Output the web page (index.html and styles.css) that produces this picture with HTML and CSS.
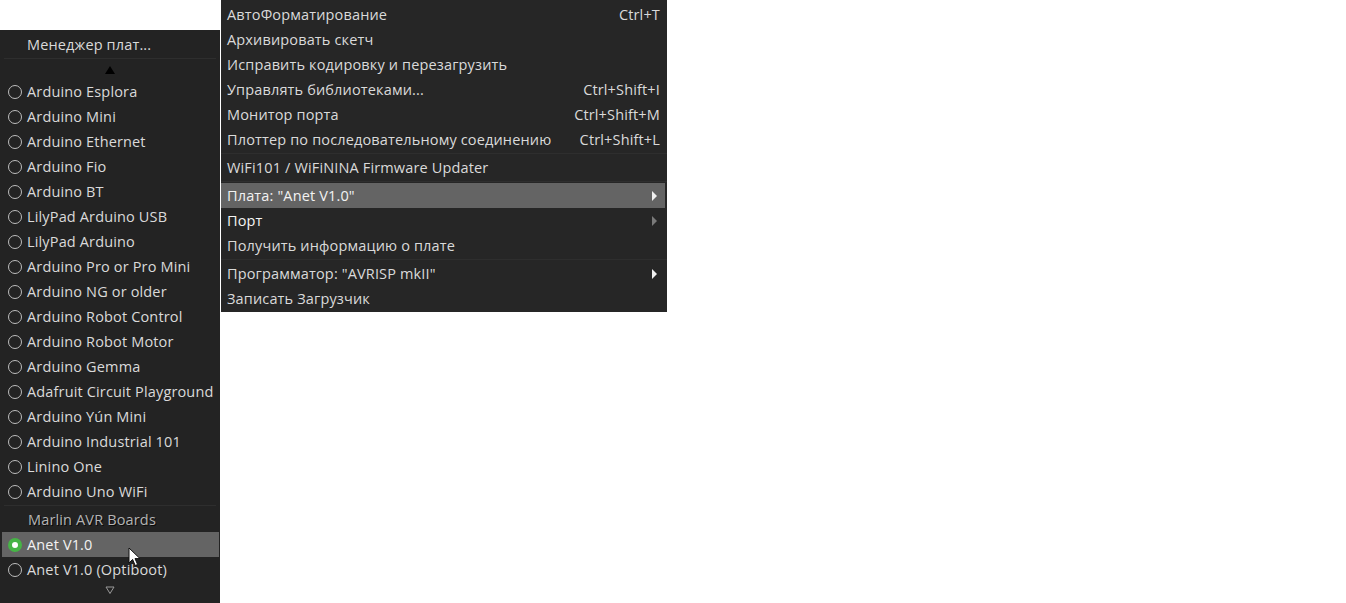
FILE: index.html
```html
<!DOCTYPE html>
<html lang="ru">
<head>
    <meta charset="UTF-8">
    <title>Инструменты</title>
    <link rel="stylesheet" href="styles.css">
</head>
<body>

    <!-- board list (scrolling submenu) -->
    <div class="boards">
        <div class="item plain">Менеджер плат...</div>
        <div class="sep"></div>
        <div class="scroll up">
            <svg width="10" height="8" viewBox="0 0 10 8"><polygon points="5,0 10,8 0,8" fill="#000"/></svg>
        </div>
        <div class="item"><span class="radio"></span>Arduino Esplora</div>
        <div class="item"><span class="radio"></span>Arduino Mini</div>
        <div class="item"><span class="radio"></span>Arduino Ethernet</div>
        <div class="item"><span class="radio"></span>Arduino Fio</div>
        <div class="item"><span class="radio"></span>Arduino BT</div>
        <div class="item"><span class="radio"></span>LilyPad Arduino USB</div>
        <div class="item"><span class="radio"></span>LilyPad Arduino</div>
        <div class="item"><span class="radio"></span>Arduino Pro or Pro Mini</div>
        <div class="item"><span class="radio"></span>Arduino NG or older</div>
        <div class="item"><span class="radio"></span>Arduino Robot Control</div>
        <div class="item"><span class="radio"></span>Arduino Robot Motor</div>
        <div class="item"><span class="radio"></span>Arduino Gemma</div>
        <div class="item"><span class="radio"></span>Adafruit Circuit Playground</div>
        <div class="item"><span class="radio"></span>Arduino Yún Mini</div>
        <div class="item"><span class="radio"></span>Arduino Industrial 101</div>
        <div class="item"><span class="radio"></span>Linino One</div>
        <div class="item"><span class="radio"></span>Arduino Uno WiFi</div>
        <div class="sep"></div>
        <div class="item header">Marlin AVR Boards</div>
        <div class="item active"><span class="radio checked"></span>Anet V1.0</div>
        <div class="item"><span class="radio"></span>Anet V1.0 (Optiboot)</div>
        <div class="scroll down">
            <svg width="10" height="8" viewBox="0 0 10 8"><polygon points="1,1 9,1 5,7.5" fill="none" stroke="#9a9a9a" stroke-width="1"/></svg>
        </div>

        <!-- mouse pointer -->
        <svg class="cursor" width="15" height="21" viewBox="0 0 15 21">
            <path d="M1,1 L1,16 L4.6,12.4 L7.2,18.5 L9.6,17.5 L7,11.6 L12,11.6 Z" fill="#ffffff" stroke="#111" stroke-width="1"/>
        </svg>
    </div>

    <!-- tools menu -->
    <div class="tools">
        <div class="entry"><span>АвтоФорматирование</span><span class="key">Ctrl+T</span></div>
        <div class="entry"><span>Архивировать скетч</span></div>
        <div class="entry"><span>Исправить кодировку и перезагрузить</span></div>
        <div class="entry"><span>Управлять библиотеками...</span><span class="key">Ctrl+Shift+I</span></div>
        <div class="entry"><span>Монитор порта</span><span class="key">Ctrl+Shift+M</span></div>
        <div class="entry"><span>Плоттер по последовательному соединению</span><span class="key">Ctrl+Shift+L</span></div>
        <div class="sep"></div>
        <div class="entry"><span>WiFi101 / WiFiNINA Firmware Updater</span></div>
        <div class="sep"></div>
        <div class="entry active"><span>Плата: "Anet V1.0"</span><span class="arrow"></span></div>
        <div class="entry bright"><span>Порт</span><span class="arrow dim"></span></div>
        <div class="entry"><span>Получить информацию о плате</span></div>
        <div class="sep"></div>
        <div class="entry"><span>Программатор: "AVRISP mkII"</span><span class="arrow"></span></div>
        <div class="entry"><span>Записать Загрузчик</span></div>
    </div>

</body>
</html>
```

FILE: styles.css
```css
/* Page */
body {
    margin: 0;
    background-color: #ffffff;
    font-family: 'Open Sans', 'Noto Sans', sans-serif;
    font-size: 14.5px;
    letter-spacing: 0.15px;
    color: #dadada;
    height: 603px;
    overflow: hidden;
}

/* Board submenu on the left */
.boards {
    position: absolute;
    left: 0;
    top: 30px;
    width: 220px;
    height: 573px;
    background-color: #232323;
    padding-top: 2px;
    box-sizing: border-box;
}

.item {
    height: 25px;
    display: flex;
    align-items: center;
    padding-left: 6px;
    margin: 0 1px 0 2px;
    white-space: nowrap;
}

.item.plain {
    padding-left: 25px;
}

.item.header {
    padding-left: 26px;
    color: #b4b4b4;
    text-shadow: 1px 1px 0 #0a0a0a;
}

.item.active {
    background-color: #646464;
    color: #f2f2f2;
}

.radio {
    width: 12px;
    height: 12px;
    border: 1px solid #bdbdbd;
    border-radius: 50%;
    margin-right: 5px;
    flex-shrink: 0;
}

.radio.checked {
    width: 6px;
    height: 6px;
    border: 4px solid #46b446;
    background-color: #ffffff;
}

.sep {
    height: 1px;
    background-color: #2e2e2e;
    margin: 1px 0;
}

.boards .sep {
    margin: 1px 4px;
}

.scroll {
    display: flex;
    justify-content: center;
    align-items: center;
}

.scroll.up {
    height: 19px;
}

.scroll.down {
    height: 16px;
}

.cursor {
    position: absolute;
    left: 128px;
    top: 517px;
}

/* Tools menu */
.tools {
    position: absolute;
    left: 221px;
    top: 0;
    width: 446px;
    height: 312px;
    background-color: #262626;
    padding-top: 2px;
    box-sizing: border-box;
}

.entry {
    height: 25px;
    display: flex;
    align-items: center;
    justify-content: space-between;
    padding: 0 7px 0 6px;
    white-space: nowrap;
}

.entry.active {
    background-color: #646464;
    color: #f2f2f2;
    margin-right: 2px;
    padding-right: 5px;
}

.entry.bright {
    color: #f4f4f4;
}

.key {
    color: #dadada;
}

.arrow {
    width: 0;
    height: 0;
    border-top: 5px solid transparent;
    border-bottom: 5px solid transparent;
    border-left: 5px solid #f0f0f0;
    margin-right: 3px;
}

.arrow.dim {
    border-left-color: #7a7a7a;
}
```
